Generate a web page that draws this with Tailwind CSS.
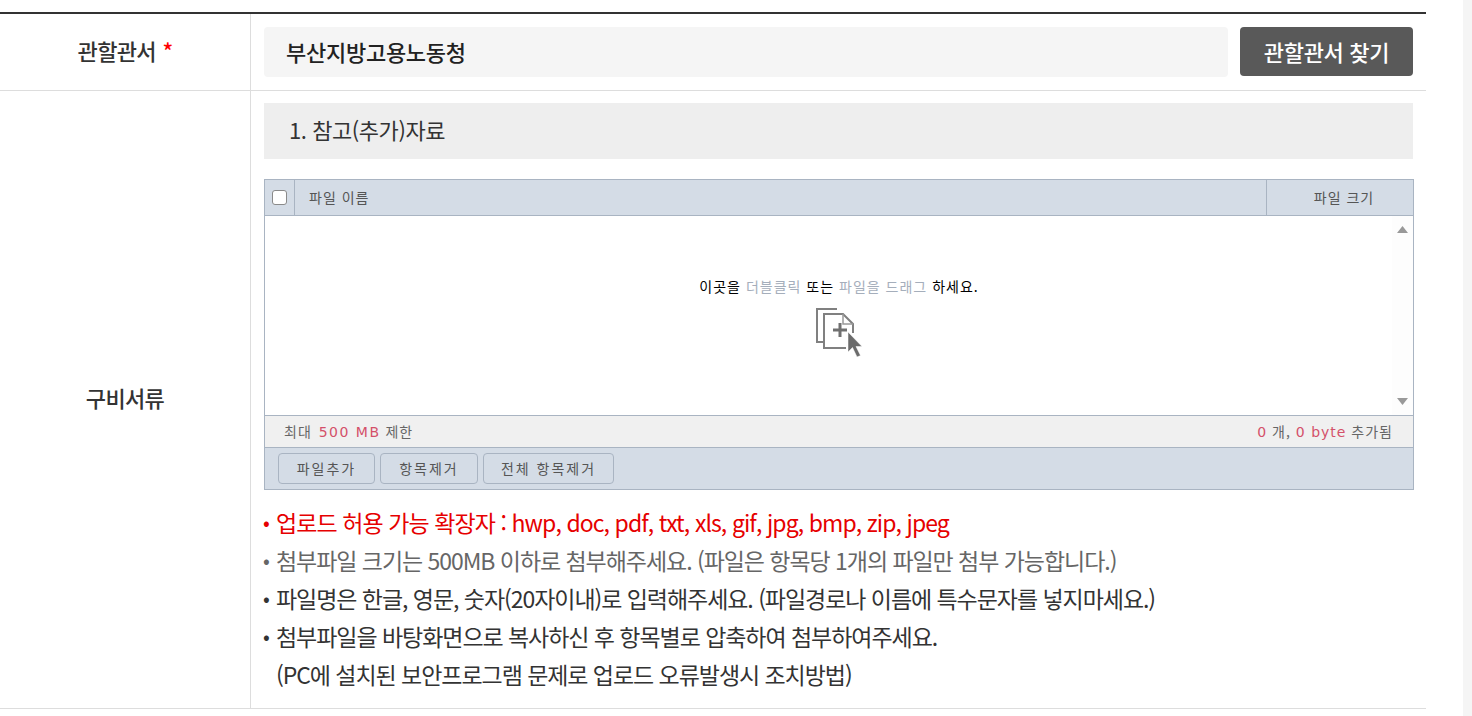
<!DOCTYPE html>
<html lang="ko">
<head>
    <meta charset="UTF-8" />
    <title>구비서류</title>
    <script src="https://cdn.jsdelivr.net/npm/@tailwindcss/browser@4"></script>
</head>
<body class="bg-white overflow-hidden font-['Noto_Sans_CJK_KR','Noto_Sans',sans-serif]">
<div class="flex h-[716px]">
    <main class="w-[1426px] pt-3">
        <div class="border-t-2 border-[#333]">
            <!-- 관할관서 -->
            <div class="flex h-[77px] border-b border-[#ddd]">
                <div class="w-[251px] shrink-0 border-r border-[#ddd] flex items-center justify-center text-[22px] font-medium text-[#333] tracking-[-0.03em] pb-[4px]">
                    관할관서&nbsp;<span class="text-[#f00] ml-px">*</span>
                </div>
                <div class="flex-1 pl-[13px] pr-[13px] pt-[13px] flex gap-3 items-start">
                    <div class="w-[964px] h-[50px] rounded-[4px] bg-[#f5f5f5] pl-[22px] pb-[2px] flex items-center text-[22px] font-medium text-[#222] tracking-[-0.012em]">부산지방고용노동청</div>
                    <button class="w-[173px] h-[49px] pb-[1px] rounded-[4px] bg-[#595959] text-white text-[22px] font-medium tracking-[-0.015em]">관할관서 찾기</button>
                </div>
            </div>
            <!-- 구비서류 -->
            <div class="flex h-[618px] border-b border-[#ddd]">
                <div class="w-[251px] shrink-0 border-r border-[#ddd] flex items-center justify-center text-[22px] font-medium text-[#333] tracking-[-0.03em] pb-[4px]">구비서류</div>
                <div class="flex-1 pl-[13px] pr-[13px] pt-3">
                    <h3 class="w-[1149px] h-[56px] bg-[#eee] pl-[25px] pb-[3px] flex items-center text-[22px] font-normal text-[#333] tracking-[-0.02em]">1. 참고(추가)자료</h3>

                    <!-- 업로더 -->
                    <div class="w-[1150px] mt-5 border border-[#a9b4c2] text-[14px] font-normal tracking-[1px] text-[#555]">
                        <div class="flex h-[36px] bg-[#d4dce6] border-b border-[#a9b4c2]">
                            <div class="w-[30px] border-r border-[#a9b4c2] flex items-center justify-center">
                                <span class="block w-[15px] h-[15px] bg-white border border-[#8a8a8a] rounded-[3px]"></span>
                            </div>
                            <div class="flex-1 pl-[14px] flex items-center">파일 이름</div>
                            <div class="w-[147px] border-l border-[#a9b4c2] flex items-center justify-center pl-[8px]">파일 크기</div>
                        </div>
                        <div class="flex h-[200px] border-b border-[#a9b4c2]">
                            <div class="flex-1 flex flex-col items-center pt-[60px] pl-[21px]">
                                <p class="text-black leading-[20px]">이곳을 <span class="text-[#a5aebb]">더블클릭</span> 또는 <span class="text-[#a5aebb]">파일을 드래그</span> 하세요.</p>
                                <svg class="mt-[10px]" width="48" height="52" viewBox="0 0 48 52" fill="none">
                                    <path d="M22 3H2V36H8" stroke="#808080" stroke-width="2" />
                                    <path d="M31 42H9V8H28L38 18V27" stroke="#808080" stroke-width="2" />
                                    <path d="M28 8V18H38" stroke="#999" stroke-width="1.500" />
                                    <path d="M25 17V31M18 24H32" stroke="#707070" stroke-width="3" />
                                    <path d="M33 26V46L37.500 41.500L42 51L45.500 49.500L41 40.500H47Z" fill="#6b6b6b" stroke="#fff" stroke-width="0.500" />
                                </svg>
                            </div>
                            <div class="w-[21px] flex flex-col items-center justify-between py-[10px] bg-[#fdfdfd]">
                                <svg width="11" height="7" viewBox="0 0 11 7"><path d="M5.500 0L11 7H0Z" fill="#999" /></svg>
                                <svg width="11" height="7" viewBox="0 0 11 7"><path d="M0 0H11L5.500 7Z" fill="#999" /></svg>
                            </div>
                        </div>
                        <div class="flex justify-between items-center h-[32px] bg-[#f0f0f0] border-b border-[#a9b4c2] pl-[19px] pr-[20px] text-[#666]">
                            <span>최대 <b class="ml-[2px] tracking-[1.500px] text-[#d4506a] font-normal font-['DejaVu_Sans',sans-serif]">500 MB</b> 제한</span>
                            <span><b class="text-[#d4506a] font-normal font-['DejaVu_Sans',sans-serif]">0</b> 개, <b class="text-[#d4506a] font-normal font-['DejaVu_Sans',sans-serif]">0 byte</b> 추가됨</span>
                        </div>
                        <div class="flex gap-[5px] h-[41px] bg-[#d4dce6] pl-[13px] pt-[5px] tracking-[2px]">
                            <button class="w-[97px] h-[31px] rounded-[4px] border border-[#a9b4c2]">파일추가</button>
                            <button class="w-[98px] h-[31px] rounded-[4px] border border-[#a9b4c2]">항목제거</button>
                            <button class="w-[131px] h-[31px] rounded-[4px] border border-[#a9b4c2]">전체 항목제거</button>
                        </div>
                    </div>

                    <!-- 안내 문구 -->
                    <ul class="mt-[13px] text-[23px] leading-[38px] tracking-[-1.05px] text-[#333]">
                        <li class="flex text-[#e60000] tracking-[-0.92px]"><span class="w-[13px] shrink-0 -ml-[1px] text-[20px]">•</span><span>업로드 허용 가능 확장자 : hwp, doc, pdf, txt, xls, gif, jpg, bmp, zip, jpeg</span></li>
                        <li class="flex text-[#666]"><span class="w-[13px] shrink-0 -ml-[1px] text-[20px]">•</span><span>첨부파일 크기는 500MB 이하로 첨부해주세요. (파일은 항목당 1개의 파일만 첨부 가능합니다.)</span></li>
                        <li class="flex"><span class="w-[13px] shrink-0 -ml-[1px] text-[20px]">•</span><span>파일명은 한글, 영문, 숫자(20자이내)로 입력해주세요. (파일경로나 이름에 특수문자를 넣지마세요.)</span></li>
                        <li class="flex"><span class="w-[13px] shrink-0 -ml-[1px] text-[20px]">•</span><span>첨부파일을 바탕화면으로 복사하신 후 항목별로 압축하여 첨부하여주세요.<br />(PC에 설치된 보안프로그램 문제로 업로드 오류발생시 조치방법)</span></li>
                    </ul>
                </div>
            </div>
        </div>
    </main>
    <div class="ml-auto w-[9px] bg-[#f5f5f5]"></div>
</div>
</body>
</html>
